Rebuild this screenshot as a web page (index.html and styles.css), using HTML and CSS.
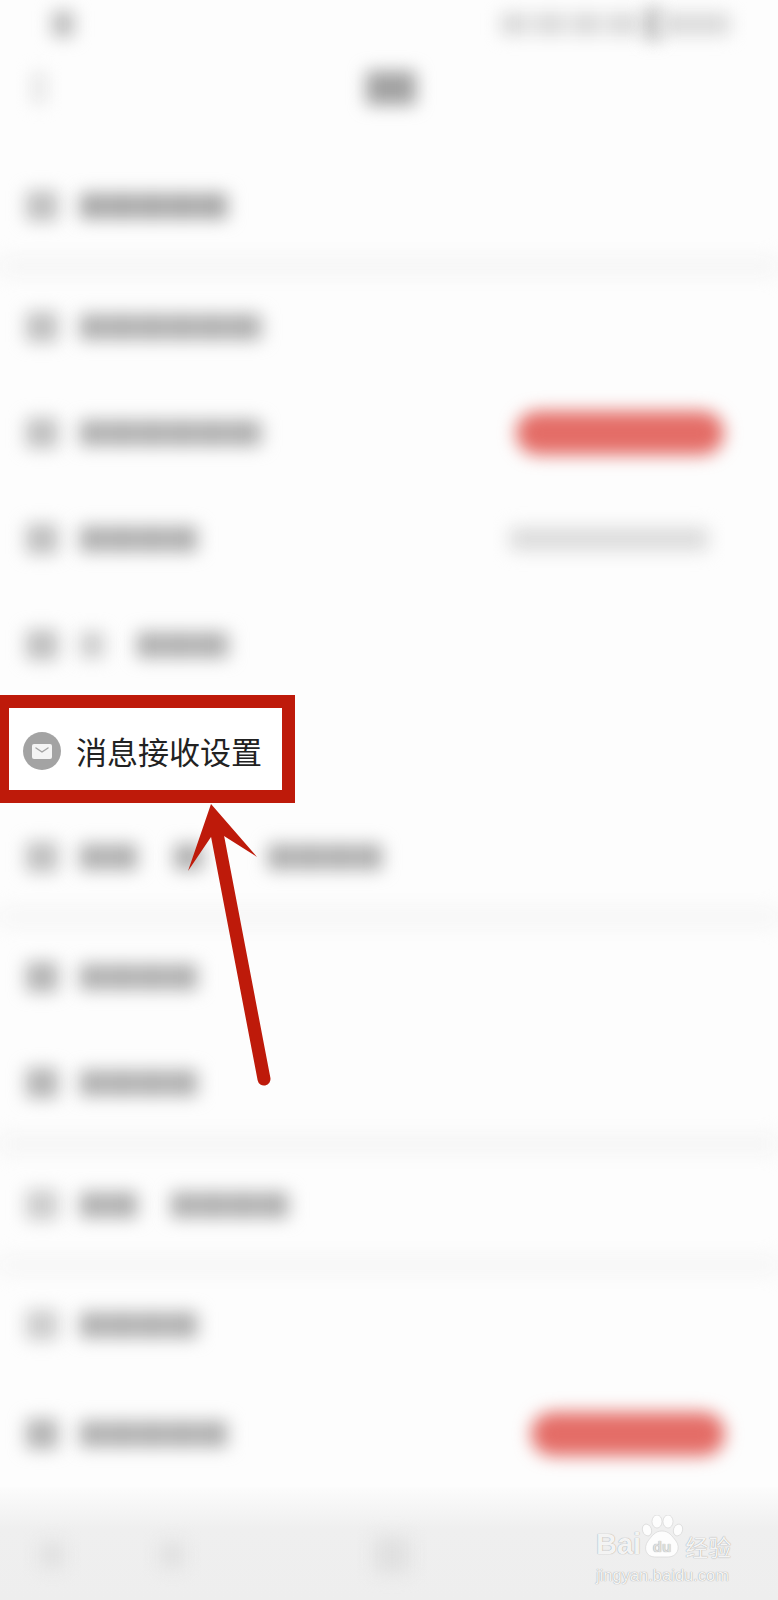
FILE: index.html
```html
<!DOCTYPE html>
<html lang="zh-CN">
<head>
    <meta charset="UTF-8">
    <meta name="viewport" content="width=device-width, initial-scale=1.0">
    <title>设置</title>
    <link rel="stylesheet" href="styles.css">
</head>
<body>
    <div class="page">
        <div class="status-bar">
            <span class="blob status-left"></span>
            <span class="status-right">
                <span class="blob status-icons"></span>
                <span class="blob status-battery"></span>
                <span class="blob status-time"></span>
            </span>
        </div>
        <div class="nav-bar">
            <span class="blob nav-back"></span>
            <span class="blob nav-title"></span>
        </div>

        <div class="group group-first">
            <div class="row"><span class="blob icon"></span><span class="blob bar w-148 dark"></span></div>
        </div>
        <div class="divider"></div>

        <div class="group">
            <div class="row"><span class="blob icon"></span><span class="blob bar w-182"></span></div>
            <div class="row">
                <span class="blob icon"></span><span class="blob bar w-182"></span>
                <span class="blob pill pill-wide"></span>
            </div>
            <div class="row">
                <span class="blob icon"></span><span class="blob bar w-118"></span>
                <span class="blob row-value"></span>
            </div>
            <div class="row">
                <span class="blob icon"></span><span class="blob bar w-24 light"></span><span class="blob bar w-92 joined"></span>
            </div>
            <div class="row row-focus">
                <div class="focus-box">
                    <span class="msg-icon">
                        <svg width="20" height="15" viewBox="0 0 20 15" fill="none">
                            <rect width="20" height="15" rx="2" fill="#f4f4f4"/>
                            <path d="M4 4l6 4 6-4" stroke="#a3a3a3" stroke-width="1.5" stroke-linecap="round" stroke-linejoin="round"/>
                        </svg>
                    </span>
                    <span class="focus-label">消息接收设置</span>
                </div>
            </div>
            <div class="row">
                <span class="blob icon"></span><span class="blob bar w-58"></span>
                <span class="blob bar w-30 mid-a"></span><span class="blob bar w-114 mid-b"></span>
            </div>
        </div>
        <div class="divider divider-tight"></div>

        <div class="group">
            <div class="row"><span class="blob icon dark"></span><span class="blob bar w-118"></span></div>
            <div class="row"><span class="blob icon dark"></span><span class="blob bar w-118"></span></div>
        </div>
        <div class="divider divider-tight divider-tall"></div>

        <div class="group">
            <div class="row">
                <span class="blob icon light"></span><span class="blob bar w-58"></span>
                <span class="blob bar w-118 gap-33"></span>
            </div>
        </div>
        <div class="divider divider-tight"></div>

        <div class="group group-last">
            <div class="row"><span class="blob icon light"></span><span class="blob bar w-118"></span></div>
            <div class="row">
                <span class="blob icon dark"></span><span class="blob bar w-148"></span>
                <span class="blob pill pill-narrow"></span>
            </div>
        </div>

        <div class="bottom-bar">
            <span class="blob tab tab-one"></span>
            <span class="blob tab tab-two"></span>
            <span class="blob tab tab-three"></span>
        </div>

        <svg class="arrow" width="100" height="290" viewBox="0 0 100 290">
            <path d="M37.5 36L84 279" stroke="#be1a0a" stroke-width="13" stroke-linecap="round" fill="none"/>
            <polygon points="31,4 77,57 44,36 31,37 8,71" fill="#be1a0a"/>
        </svg>

        <div class="watermark">
            <div class="wm-logo">
                <span class="wm-bai">Bai</span>
                <svg class="wm-paw" width="44" height="44" viewBox="0 0 44 44">
                    <ellipse cx="7" cy="15" rx="4.5" ry="6" fill="#fff" fill-opacity=".85" stroke="#d2d2d2" stroke-width=".6" transform="rotate(-18 7 15)"/>
                    <ellipse cx="17" cy="6.5" rx="5" ry="6.5" fill="#fff" fill-opacity=".85" stroke="#d2d2d2" stroke-width=".6"/>
                    <ellipse cx="28" cy="6.5" rx="5" ry="6.5" fill="#fff" fill-opacity=".85" stroke="#d2d2d2" stroke-width=".6"/>
                    <ellipse cx="38" cy="15" rx="4.5" ry="6" fill="#fff" fill-opacity=".85" stroke="#d2d2d2" stroke-width=".6" transform="rotate(18 38 15)"/>
                    <path d="M22 16c7 0 10 5 14 10 5 7 1 16-8 16H15C6 42 3 33 8 26c4-5 7-10 14-10z" fill="#fff" fill-opacity=".85" stroke="#d2d2d2" stroke-width=".6"/>
                    <text x="22" y="37" text-anchor="middle" class="wm-du">du</text>
                </svg>
                <span class="wm-cn">经验</span>
            </div>
            <div class="wm-url">jingyan.baidu.com</div>
        </div>
    </div>
</body>
</html>
```

FILE: styles.css
```css
:root {
    --page: #fdfdfd;
    --red: #be1a0a;
    --pill: #e46d67;
}
html, body {
    margin: 0;
    padding: 0;
    background: var(--page);
    font-family: "Noto Sans CJK SC", "Noto Sans", sans-serif;
}
.page {
    position: relative;
    width: 778px;
    height: 1600px;
    overflow: hidden;
    display: flex;
    flex-direction: column;
    background: var(--page);
}
.blob {
    display: block;
    flex: none;
    filter: blur(8.5px);
}

/* top */
.status-bar {
    height: 48px;
    display: flex;
    align-items: center;
    justify-content: space-between;
    padding: 0 48px 0 52px;
}
.status-left {
    width: 22px;
    height: 26px;
    background: #bdbdbd;
}
.status-right {
    display: flex;
    align-items: center;
}
.status-icons {
    width: 145px;
    height: 22px;
    background: repeating-linear-gradient(90deg, #d8d8d8 0 26px, #eeeeee 26px 36px);
}
.status-battery {
    width: 14px;
    height: 32px;
    background: #b2b2b2;
}
.status-time {
    width: 70px;
    height: 22px;
    background: #dadada;
}
.nav-bar {
    height: 80px;
    display: flex;
    align-items: center;
    padding-left: 33px;
    box-sizing: border-box;
}
.nav-back {
    width: 12px;
    height: 32px;
    background: #e2e2e2;
}
.nav-title {
    width: 50px;
    height: 34px;
    margin-left: 321px;
    background: #a2a2a2;
}

/* list */
.group-first {
    margin-top: 25px;
}
.row {
    height: 106px;
    display: flex;
    align-items: center;
    padding-left: 26px;
}
.icon {
    width: 32px;
    height: 30px;
    margin-right: 22px;
    background: #c0c0c0;
}
.icon.light {
    background: #cccccc;
}
.icon.dark {
    background: #b4b4b4;
}
.bar {
    height: 26px;
    background: repeating-linear-gradient(90deg, #aeaeae 0 24px, #bebebe 24px 30px);
}
.bar.dark {
    background: repeating-linear-gradient(90deg, #a6a6a6 0 24px, #b6b6b6 24px 30px);
}
.bar.light {
    background: #cccccc;
}
.w-24 { width: 24px; }
.w-30 { width: 30px; }
.w-58 { width: 58px; }
.w-92 { width: 92px; }
.w-114 { width: 114px; }
.w-118 { width: 118px; }
.w-148 { width: 148px; }
.w-182 { width: 182px; }
.joined { margin-left: 33px; }
.mid-a { margin-left: 36px; }
.mid-b { margin-left: 64px; }
.gap-33 { margin-left: 33px; }
.row-value {
    width: 198px;
    height: 24px;
    margin-left: auto;
    margin-right: 70px;
    background: #dcdcdc;
}
.pill {
    height: 44px;
    border-radius: 22px;
    margin-left: auto;
    background: var(--pill);
}
.pill-wide {
    width: 208px;
    margin-right: 54px;
}
.pill-narrow {
    width: 194px;
    margin-right: 53px;
}
.divider {
    height: 15px;
    background: #f3f3f3;
    filter: blur(10px);
}
.divider-tight {
    height: 14px;
}
.divider-tall {
    height: 16px;
}
.group-last .row + .row {
    margin-top: 3px;
}

/* highlighted row */
.row-focus {
    padding-left: 0;
    align-items: flex-start;
    position: relative;
    z-index: 1;
}
.focus-box {
    width: 295px;
    height: 108px;
    margin-top: -3px;
    box-sizing: border-box;
    border: 13px solid var(--red);
    border-left-width: 9px;
    background: #fff;
    display: flex;
    align-items: center;
    padding: 4px 0 0 14px;
}
.msg-icon {
    width: 38px;
    height: 38px;
    border-radius: 50%;
    background: #a3a3a3;
    display: flex;
    align-items: center;
    justify-content: center;
    flex: none;
}
.focus-label {
    margin-left: 15px;
    font-size: 31px;
    line-height: 40px;
    color: #222;
    white-space: nowrap;
}

/* bottom */
.bottom-bar {
    flex: 1;
    display: flex;
    align-items: flex-start;
    background: linear-gradient(#fcfcfc 0, #efefef 42px, #eeeeee 100%);
}
.tab {
    width: 24px;
    height: 26px;
    margin-top: 55px;
    background: #e0e0e0;
}
.tab-one { margin-left: 40px; }
.tab-two { margin-left: 96px; }
.tab-three {
    margin-left: 190px;
    width: 36px;
    height: 36px;
    margin-top: 50px;
}

/* annotation over the page */
.arrow {
    position: absolute;
    left: 180px;
    top: 800px;
    z-index: 2;
}
.watermark {
    position: absolute;
    right: 44px;
    bottom: 15px;
    width: 138px;
    color: rgba(255, 255, 255, 0.92);
    text-shadow: 0 0 1px rgba(0, 0, 0, 0.45);
}
.wm-logo {
    display: flex;
    align-items: flex-end;
    height: 44px;
}
.wm-bai {
    font-family: "Liberation Sans", Arial, sans-serif;
    font-weight: 700;
    font-size: 29px;
    line-height: 27px;
    margin-bottom: 1px;
}
.wm-paw {
    flex: none;
    margin-left: -1px;
}
.wm-du {
    font-family: "Liberation Sans", Arial, sans-serif;
    font-weight: 700;
    font-size: 15px;
    fill: #e0e0e0;
}
.wm-cn {
    font-size: 23px;
    line-height: 26px;
    margin-left: 1px;
    white-space: nowrap;
}
.wm-url {
    font-family: "Liberation Sans", Arial, sans-serif;
    font-size: 16.5px;
    line-height: 20px;
    margin-top: 6px;
    white-space: nowrap;
}
```
